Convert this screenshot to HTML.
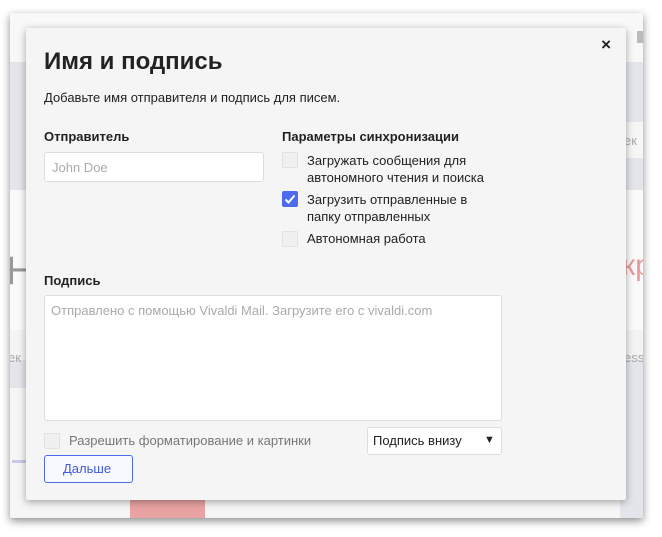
<!DOCTYPE html>
<html><head><meta charset="utf-8"><style>
body{margin:0;width:662px;height:537px;background:#fff;position:relative;overflow:hidden;font-family:"Liberation Sans","DejaVu Sans",sans-serif;}
.win{position:absolute;left:10px;top:13px;width:633px;height:505px;background:#f3f3f5;box-shadow:0 3px 8px rgba(0,0,0,.45);overflow:hidden}
.b{position:absolute}
.dlg{position:absolute;left:26px;top:28px;width:600px;height:472px;background:#f5f5f5;box-shadow:0 2px 8px rgba(0,0,0,.35);border-radius:2px;color:#222}
.t{position:absolute;white-space:nowrap}
.cb{position:absolute;width:14px;height:14px;border:1px solid #e2e2e2;background:#f0f0f0;border-radius:2px}
.inp{position:absolute;background:#fff;border:1px solid #ddd;border-radius:3px}
</style></head><body>
<div class="win">
 <div class="b" style="left:0;top:0;width:633px;height:49px;background:#f8f8f8"></div>
 <div class="b" style="left:0;top:49px;width:20px;height:128px;background:#e4e5eb"></div>
 <div class="b" style="left:0;top:177px;width:20px;height:140px;background:#fafafa"></div>
 <div class="b" style="left:0;top:317px;width:20px;height:30px;background:#f4f4f4"></div>
 <div class="b" style="left:0;top:347px;width:20px;height:28px;background:#e4e5eb"></div>
 <div class="b" style="left:0;top:375px;width:633px;height:130px;background:#f6f6f6"></div>
 <div class="b" style="left:2px;top:447px;width:16px;height:3px;background:#c8cbe8"></div>
 <div class="b" style="left:120px;top:487px;width:75px;height:18px;background:#e9a3a3"></div>
 <div class="b" style="left:610px;top:49px;width:23px;height:60px;background:#e4e5eb"></div>
 <div class="b" style="left:610px;top:109px;width:23px;height:36px;background:#f6f6f6"></div>
 <div class="b" style="left:610px;top:145px;width:23px;height:32px;background:#e4e5eb"></div>
 <div class="b" style="left:610px;top:177px;width:23px;height:140px;background:#fafafa"></div>
 <div class="b" style="left:610px;top:347px;width:23px;height:158px;background:#e4e5eb"></div>
 <div class="t" style="left:-4px;top:236px;font-size:40px;color:#999">H</div>
 <div class="t" style="left:-2px;top:337px;font-size:13px;color:#aaa">ек</div>
 <div class="t" style="left:614px;top:120px;font-size:13px;color:#aaa">ек</div>
 <div class="t" style="left:612px;top:236px;font-size:30px;color:#e89a9a">кр</div>
 <div class="t" style="left:614px;top:337px;font-size:13px;color:#aaa">ess</div>
 <div class="b" style="left:627px;top:18px;width:6px;height:12px;background:#bbb"></div>
</div>
<div class="dlg">
 <div class="t" style="right:15px;top:7px;font-size:17px;font-weight:bold">×</div>
 <div class="t" style="left:18px;top:20px;font-size:24px;font-weight:bold;color:#222">Имя и подпись</div>
 <div class="t" style="left:18px;top:62px;font-size:13px">Добавьте имя отправителя и подпись для писем.</div>
 <div class="t" style="left:18px;top:101px;font-size:13px;font-weight:bold">Отправитель</div>
 <div class="inp" style="left:18px;top:124px;width:218px;height:28px"></div>
 <div class="t" style="left:26px;top:132px;font-size:13px;color:#aaa">John Doe</div>
 <div class="t" style="left:256px;top:101px;font-size:13px;font-weight:bold">Параметры синхронизации</div>
 <div class="cb" style="left:256px;top:124px"></div>
 <div class="t" style="left:281px;top:124px;font-size:13px;line-height:17px">Загружать сообщения для<br>автономного чтения и поиска</div>
 <div class="b" style="left:256px;top:163px;width:16px;height:16px;background:#4e6bf0;border-radius:2px"><svg width="16" height="16"><path d="M3.5 8.5l3 3 6-7" fill="none" stroke="#fff" stroke-width="2"/></svg></div>
 <div class="t" style="left:281px;top:163px;font-size:13px;line-height:17px">Загрузить отправленные в<br>папку отправленных</div>
 <div class="cb" style="left:256px;top:203px"></div>
 <div class="t" style="left:281px;top:203px;font-size:13px">Автономная работа</div>
 <div class="t" style="left:18px;top:245px;font-size:13px;font-weight:bold">Подпись</div>
 <div class="inp" style="left:18px;top:267px;width:456px;height:124px"></div>
 <div class="t" style="left:25px;top:275px;font-size:13px;color:#aaa">Отправлено с помощью Vivaldi Mail. Загрузите его с vivaldi.com</div>
 <div class="cb" style="left:18px;top:405px"></div>
 <div class="t" style="left:43px;top:405px;font-size:13px;color:#777">Разрешить форматирование и картинки</div>
 <div class="inp" style="left:341px;top:399px;width:133px;height:26px"></div>
 <div class="t" style="left:347px;top:405px;font-size:13px">Подпись внизу</div>
 <div class="t" style="left:458px;top:406px;font-size:11px">▼</div>
 <div class="b" style="left:18px;top:427px;width:87px;height:26px;border:1px solid #4e6bf0;border-radius:3px;background:#f8f8ff"></div>
 <div class="t" style="left:37px;top:433px;font-size:13px;color:#3f5ad8">Дальше</div>
</div>
</body></html>
